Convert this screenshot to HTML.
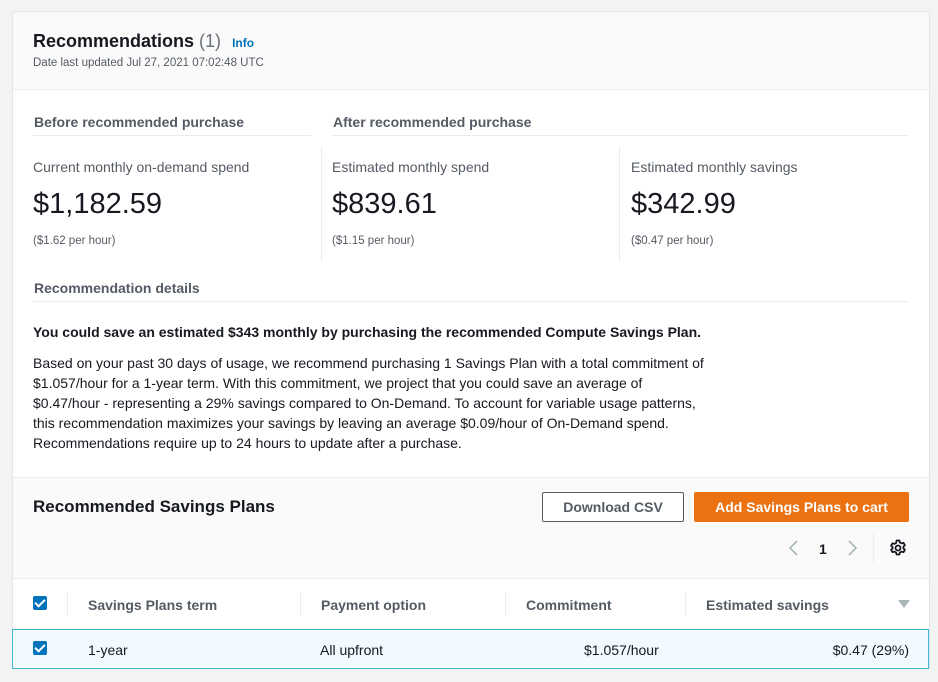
<!DOCTYPE html>
<html><head><style>
*{margin:0;padding:0;box-sizing:border-box}
body{width:938px;height:682px;background:#f2f3f3;font-family:"Liberation Sans",Arial,sans-serif;color:#16191f;position:relative;overflow:hidden}
.a{position:absolute;white-space:nowrap}
.panel{position:absolute;left:12px;top:11px;width:918px;height:658px;background:#fff;border:1px solid #e4e4e4}
.lbl{font-size:14px;font-weight:bold;color:#545b64}
.sub{font-size:14px;color:#545b64}
.big{font-size:29px;color:#16191f}
.sm{font-size:11.5px;color:#545b64}
.hr{position:absolute;height:1px;background:#eaeded}
.vr{position:absolute;width:1px;background:#eaeded}
.cb{position:absolute;width:14px;height:14px;background:#0073bb;border-radius:2px}
.cb:after{content:"";position:absolute;left:4px;top:1px;width:4px;height:8px;border:solid #fff;border-width:0 2px 2px 0;transform:rotate(45deg)}
.th{font-size:14px;font-weight:bold;color:#545b64}
.td{font-size:14px;color:#16191f}
</style></head><body>
<div class="panel"></div>
<div class="a" style="left:13px;top:12px;width:916px;height:78px;background:#fafafa;border-bottom:1px solid #eaeded"></div>
<div class="a" style="left:33px;top:31px;font-size:18px;font-weight:bold;color:#16191f">Recommendations <span style="font-weight:normal;color:#687078">(1)</span> <span style="font-size:12px;color:#0073bb;margin-left:6px">Info</span></div>
<div class="a" style="left:33px;top:57px;font-size:11.5px;color:#545b64">Date last updated Jul 27, 2021 07:02:48 UTC</div>

<div class="a lbl" style="left:34px;top:114px">Before recommended purchase</div>
<div class="a lbl" style="left:333px;top:114px">After recommended purchase</div>
<div class="hr" style="left:33px;top:135px;width:278px"></div>
<div class="hr" style="left:332px;top:135px;width:576px"></div>

<div class="a sub" style="left:33px;top:159px">Current monthly on-demand spend</div>
<div class="a big" style="left:33px;top:188px">$1,182.59</div>
<div class="a sm" style="left:33px;top:235px">($1.62 per hour)</div>
<div class="vr" style="left:321px;top:146px;height:116px"></div>
<div class="a sub" style="left:332px;top:159px">Estimated monthly spend</div>
<div class="a big" style="left:332px;top:188px">$839.61</div>
<div class="a sm" style="left:332px;top:235px">($1.15 per hour)</div>
<div class="vr" style="left:619px;top:146px;height:116px"></div>
<div class="a sub" style="left:631px;top:159px">Estimated monthly savings</div>
<div class="a big" style="left:631px;top:188px">$342.99</div>
<div class="a sm" style="left:631px;top:235px">($0.47 per hour)</div>

<div class="a lbl" style="left:34px;top:280px">Recommendation details</div>
<div class="hr" style="left:33px;top:301px;width:875px"></div>
<div class="a" style="left:33px;top:324px;font-size:14px;font-weight:bold">You could save an estimated $343 monthly by purchasing the recommended Compute Savings Plan.</div>
<div class="a" style="left:33px;top:353px;font-size:14px;line-height:20px">Based on your past 30 days of usage, we recommend purchasing 1 Savings Plan with a total commitment of<br>$1.057/hour for a 1-year term. With this commitment, we project that you could save an average of<br>$0.47/hour - representing a 29% savings compared to On-Demand. To account for variable usage patterns,<br>this recommendation maximizes your savings by leaving an average $0.09/hour of On-Demand spend.<br>Recommendations require up to 24 hours to update after a purchase.</div>

<div class="a" style="left:13px;top:477px;width:916px;height:102px;background:#fafafa;border-top:1px solid #eaeded;border-bottom:1px solid #eaeded"></div>
<div class="a" style="left:33px;top:497px;font-size:17px;font-weight:bold">Recommended Savings Plans</div>
<div class="a" style="left:542px;top:492px;width:142px;height:30px;border:1px solid #545b64;border-radius:2px;background:#fff;font-size:14px;font-weight:bold;color:#545b64;text-align:center;line-height:28px">Download CSV</div>
<div class="a" style="left:694px;top:492px;width:215px;height:30px;background:#ec7211;border-radius:2px;font-size:14px;font-weight:bold;color:#fff;text-align:center;line-height:30px">Add Savings Plans to cart</div>
<svg class="a" style="left:786px;top:539px" width="16" height="18"><path d="M11 2 L4 9 L11 16" fill="none" stroke="#aab7b8" stroke-width="1.6"/></svg>
<div class="a" style="left:819px;top:541px;font-size:14px;font-weight:bold">1</div>
<svg class="a" style="left:845px;top:539px" width="16" height="18"><path d="M4 2 L11 9 L4 16" fill="none" stroke="#aab7b8" stroke-width="1.6"/></svg>
<div class="vr" style="left:873px;top:533px;height:30px"></div>
<svg class="a" style="left:889px;top:539px" width="18" height="18" viewBox="0 0 18 18"><circle cx="9" cy="9" r="2.5" fill="none" stroke="#16191f" stroke-width="1.8"/><path d="M7.6 1.5h2.8l.5 2 1.6.9 2-.6 1.4 2.4-1.5 1.4v1.8l1.5 1.4-1.4 2.4-2-.6-1.6.9-.5 2H7.6l-.5-2-1.6-.9-2 .6-1.4-2.4 1.5-1.4V8.1L2.1 6.7l1.4-2.4 2 .6 1.6-.9z" fill="none" stroke="#16191f" stroke-width="1.8" stroke-linejoin="round"/></svg>

<div class="cb" style="left:33px;top:596px"></div>
<div class="vr" style="left:67px;top:592px;height:24px"></div>
<div class="a th" style="left:88px;top:597px">Savings Plans term</div>
<div class="vr" style="left:300px;top:592px;height:24px"></div>
<div class="a th" style="left:321px;top:597px">Payment option</div>
<div class="vr" style="left:505px;top:592px;height:24px"></div>
<div class="a th" style="left:526px;top:597px">Commitment</div>
<div class="vr" style="left:685px;top:592px;height:24px"></div>
<div class="a th" style="left:706px;top:597px">Estimated savings</div>
<svg class="a" style="left:898px;top:599px" width="12" height="10"><path d="M0 1h12L6 9z" fill="#aab7b8"/></svg>

<div class="a" style="left:12px;top:629px;width:917px;height:40px;background:#f1faff;border:1px solid #44b9d6"></div>
<div class="cb" style="left:33px;top:641px"></div>
<div class="a td" style="left:88px;top:642px">1-year</div>
<div class="a td" style="left:320px;top:642px">All upfront</div>
<div class="a td" style="left:584px;top:642px">$1.057/hour</div>
<div class="a td" style="right:29px;top:642px">$0.47 (29%)</div>
</body></html>
